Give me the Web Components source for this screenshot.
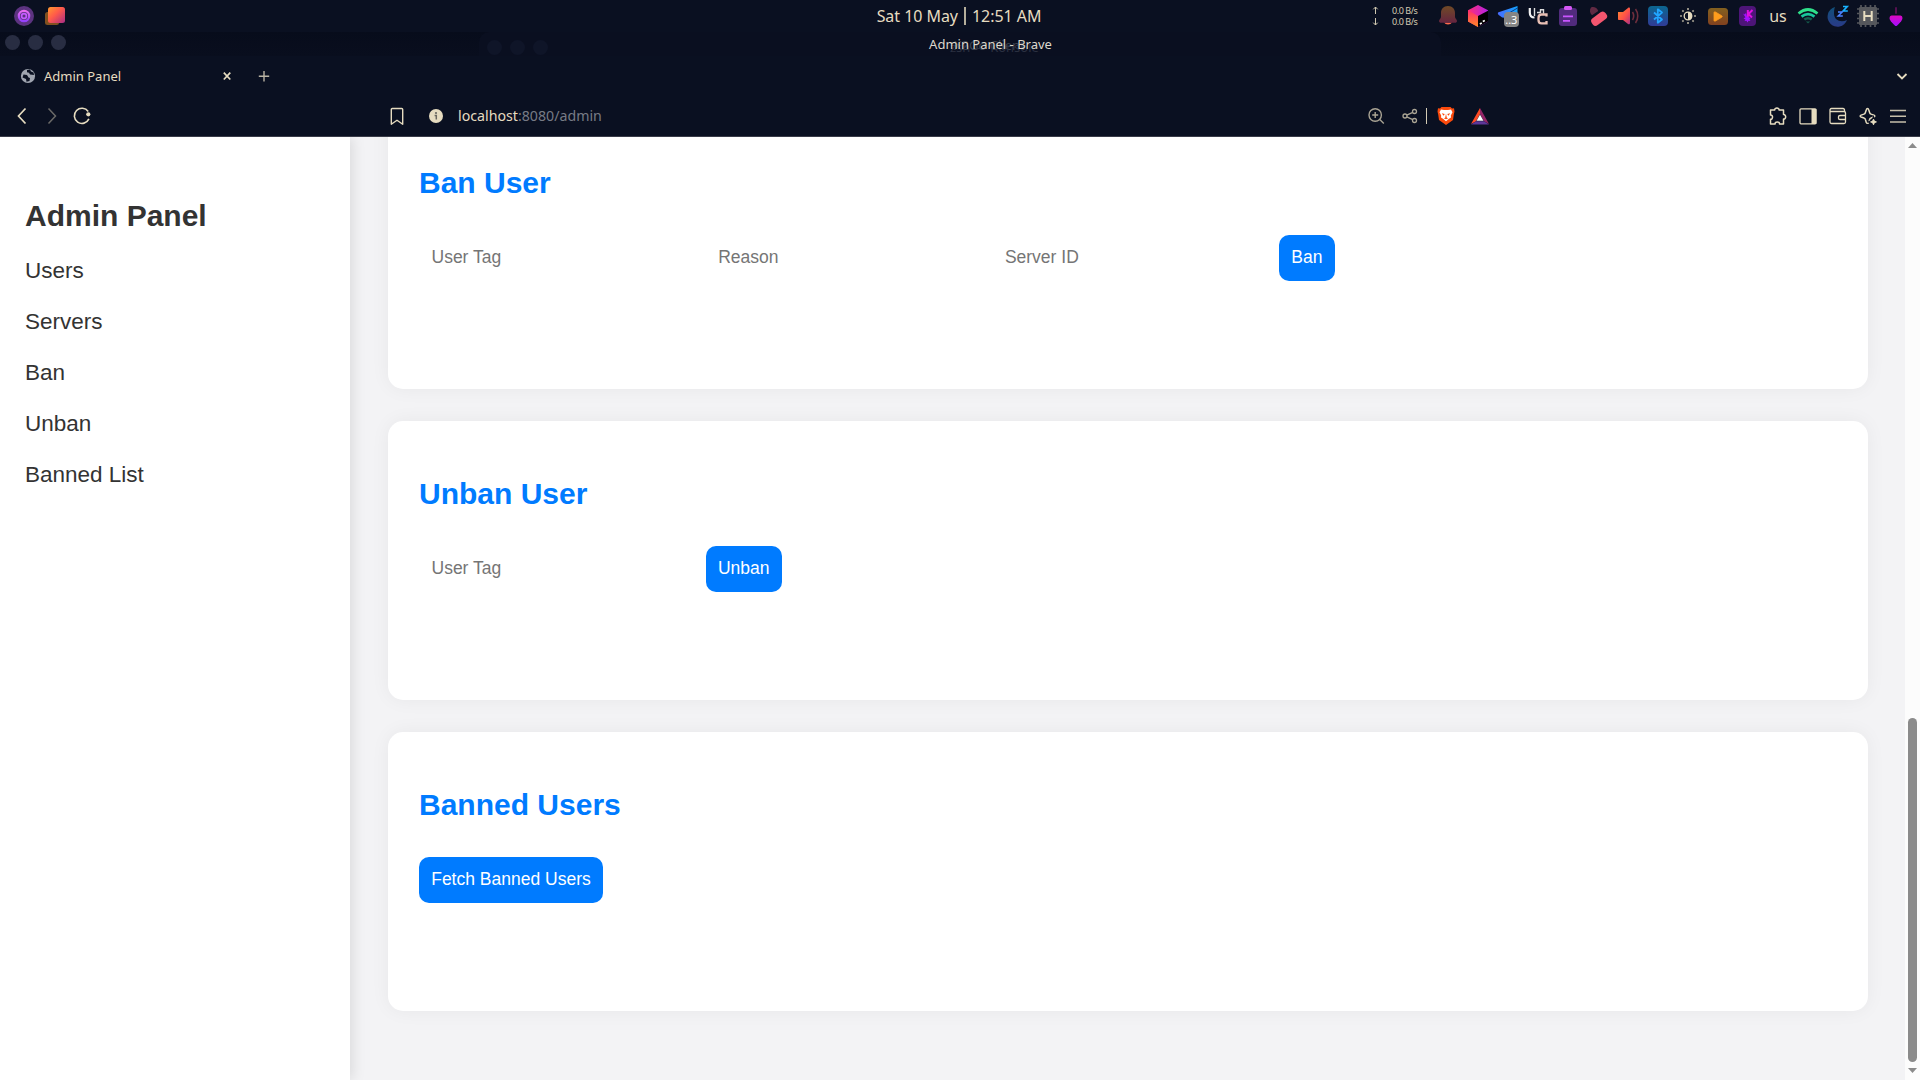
<!DOCTYPE html>
<html lang="en">
<head>
<meta charset="utf-8">
<title>Admin Panel</title>
<style>
html,body{margin:0;height:100%;overflow:hidden;background:#f3f3f5}
</style>
</head>
<body>
<desktop-screen></desktop-screen>
<script>
const define = (name, html) => customElements.define(name, class extends HTMLElement {
  constructor() {
    super();
    const t = document.createElement('template');
    t.innerHTML = typeof html === 'function' ? html(this) : html;
    this.attachShadow({ mode: 'open' }).append(t.content.cloneNode(true));
  }
});

const cream = '#e6dcc0';
const icons = {
  debian: `<defs><linearGradient id="a" x1="0" y1="0" x2="0" y2="1"><stop offset="0" stop-color="#ea6cf2"/><stop offset="1" stop-color="#9440ff"/></linearGradient></defs><circle cx="15" cy="16" r="10" fill="#5c3380"/><circle cx="15" cy="16" r="5.200" fill="none" stroke="url(#a)" stroke-width="2.200"/><circle cx="15" cy="16" r="2.400" fill="none" stroke="#c45bff" stroke-width="1.700"/>`,
  squares: `<defs><linearGradient id="a" x1="0" y1="0" x2="1" y2="1"><stop offset="0" stop-color="#ff9a2e"/><stop offset=".45" stop-color="#ff5a4a"/><stop offset="1" stop-color="#a82c86"/></linearGradient></defs><rect x="5" y="12" width="14" height="13" rx="2.5" fill="#80501f"/><rect x="8" y="7" width="17" height="16" rx="2.5" fill="url(#a)"/>`,
  bell: `<defs><linearGradient id="a" x1="0" y1="0" x2="0" y2="1"><stop offset="0" stop-color="#6f4a26"/><stop offset="1" stop-color="#652440"/></linearGradient></defs><path d="M11 22.500a4.500 3.500 0 0 0 8 0z" fill="#ff6a4d"/><path d="M15 6c-4.500 0-7 3.200-7 7v4c0 1.500-2 2.500-2 4 0 1.200 1 1.800 2 1.800h14c1 0 2-.6 2-1.800 0-1.500-2-2.500-2-4v-4c0-3.800-2.500-7-7-7z" fill="url(#a)"/>`,
  toolbox: `<defs><linearGradient id="a" x1="0" y1="0" x2="1" y2="0"><stop offset="0" stop-color="#ff2f74"/><stop offset="1" stop-color="#b421e6"/></linearGradient><linearGradient id="b" x1="0" y1="0" x2="0" y2="1"><stop offset="0" stop-color="#ff2c70"/><stop offset="1" stop-color="#ff8a22"/></linearGradient></defs><path d="M15 5l10 5.200v11.300L15 27 5 21.500V10.200z" fill="url(#a)"/><path d="M5 10.200l10 5.800v11L5 21.500z" fill="url(#b)"/><path d="M15 16l10-5.300v10.800L15 27z" fill="#000"/><path d="M16.800 24l2-1M19.800 21.500l2-1" stroke="#fff" stroke-width="1.500"/>`,
  telegram: `<defs><linearGradient id="a" x1="0" y1="0" x2="1" y2="0"><stop offset="0" stop-color="#4a6cff"/><stop offset="1" stop-color="#12a4ff"/></linearGradient></defs><path d="M24.500 6L5.500 12.300c-1 .5-.8 1.900.2 2.700l3.500 2.500L24.500 19z" fill="url(#a)"/><path d="M11 16L24.500 8" stroke="#0c3d80" stroke-width="1"/><rect x="11" y="12" width="15" height="15" rx="4" fill="#858585"/><text x="18.300" y="23.800" font-size="11" fill="#fff" text-anchor="middle" font-family="Noto Sans">..3</text>`,
  uc: `<path d="M6.800 8v4.500c0 3 1.500 5 4.700 5" fill="none" stroke="#f2f2f2" stroke-width="2.200"/><path d="M11.500 8v8M14 12.500h3.500v-2.800h3v4" stroke="#dcdcdc" fill="none" stroke-width="1.400"/><path d="M23.500 16.500v-2h-5c-2 0-3 1.200-3 3.400v2.100c0 2.200 1 3.400 3 3.400h5v-2.500" fill="none" stroke="#e9c0b5" stroke-width="2.300"/>`,
  clipboard: `<rect x="6" y="8" width="18" height="18" rx="3" fill="#512b7d"/><rect x="11" y="6" width="8" height="4" rx="1.500" fill="#d558f5"/><path d="M10 15.500h10v1.800h-10zM10 20h7v1.800h-7z" fill="#c955ff"/>`,
  pills: `<path d="M8 7.500c2.500-1.200 5.500 0 6.500 2l.8 1.500-6.300 4.200c-2.300-2-2.700-5.500-1-7.700z" fill="#612a43"/><rect x="7.500" y="14.500" width="17" height="8.500" rx="3.500" transform="rotate(-37 16 18.500)" fill="#f4566f"/>`,
  volume: `<defs><linearGradient id="a" x1="0" y1="0" x2="1" y2="1"><stop offset="0" stop-color="#ff8b2d"/><stop offset=".55" stop-color="#ff5049"/><stop offset="1" stop-color="#a42f85"/></linearGradient></defs><path d="M5 12h5l5-4c1-.8 2-.3 2 1v14c0 1.200-1 1.800-2 1l-5-4H6c-.6 0-1-.5-1-1z" fill="url(#a)"/><path d="M19.500 12c1.500 2.500 1.500 5.500 0 8M22.500 9c3 4 3 10 0 14" fill="none" stroke="#6e2e3d" stroke-width="1.600"/>`,
  bluetooth: `<defs><linearGradient id="a" x1="0" y1="0" x2="0" y2="1"><stop offset="0" stop-color="#0b668f"/><stop offset="1" stop-color="#303b96"/></linearGradient></defs><rect x="5" y="6" width="20" height="20" rx="4" fill="url(#a)"/><path d="M11 12.500l8 7-4.200 3.300V9.300l4.200 3.200-8 7" fill="none" stroke="#21a5ff" stroke-width="1.800" stroke-linejoin="round"/>`,
  brightness: `<circle cx="15" cy="16" r="3.800" fill="none" stroke="${cream}" stroke-width="1.300"/><path d="M15 12a4 4 0 0 1 0 8z" fill="${cream}"/><path d="M15 8v2M15 22v2M7 16h2M21 16h2M9.300 10.300l1.300 1.300M19.400 20.400l1.300 1.300M9.300 21.700l1.300-1.300M19.400 11.600l1.300-1.300" stroke="#aaa494" stroke-width="1.700"/>`,
  play: `<defs><linearGradient id="a" x1="0" y1="0" x2="0" y2="1"><stop offset="0" stop-color="#83601f"/><stop offset="1" stop-color="#82411f"/></linearGradient></defs><rect x="5" y="8" width="20" height="17" rx="3.500" fill="url(#a)"/><path d="M11 12.800c0-.9.700-1.200 1.400-.8l6.300 3.700c.7.400.7 1.200 0 1.600l-6.300 3.700c-.7.400-1.400.1-1.400-.8z" fill="#ff9d1d" stroke="#ff9d1d" stroke-width=".8"/>`,
  kget: `<rect x="6" y="6" width="17" height="20" rx="4" fill="#4d1578"/><path d="M14.800 10v7.500M19.500 10l-4 4 3.500 3.500" fill="none" stroke="#e010e0" stroke-width="2"/><path d="M10 13.500l1.500 1 1.500-1.500 1 3.500 3.500 1.500-1 1.500 1 1.500-2-.3-1 1.800-1-1.800-2 .3 1-1.500-2-1 2-1.300-1.200-1.700z" fill="#a512ff"/>`,
  wifi: `<g fill="none" stroke-width="2.700"><path d="M5.500 13.500q9.500-8 19 0" stroke="#2fe08a"/><path d="M8.500 16.600q6.500-5 13 0" stroke="#18c79b"/><path d="M11.300 19.500q3.700-2.500 7.400 0" stroke="#14624f"/></g><path d="M12.800 21.500h4.400L15 23.500z" fill="#13594a"/>`,
  moon: `<defs><linearGradient id="a" x1="0" y1="0" x2="0" y2="1"><stop offset="0" stop-color="#11507a"/><stop offset="1" stop-color="#293a87"/></linearGradient></defs><path d="M12 7a10 10 0 1 0 12 13c-6 3-13 .5-13-6.500 0-2.700.2-4.500 1-6.500z" fill="url(#a)"/><path d="M20 6.500h4.200l-4 4.500h4.600" fill="none" stroke="#18b2ff" stroke-width="1.700"/><path d="M15 12h4.200l-4 4h4.600" fill="none" stroke="#4b82ff" stroke-width="1.500"/>`,
  chip: `<path d="M8 5v22M12.500 5v22M17.500 5v22M22 5v22M4 9h22M4 13.500h22M4 18.500h22M4 23h22" stroke="#55575c" stroke-width="1.700"/><rect x="6" y="7" width="18" height="18" rx="1" fill="#55575c"/><path d="M11.300 11v10M18.700 11v10M11.300 16h7.400" stroke="${cream}" stroke-width="2"/>`,
  drop: `<defs><linearGradient id="a" x1="0" y1="0" x2="0" y2="1"><stop offset="0" stop-color="#dc0ac0"/><stop offset="1" stop-color="#a40cff"/></linearGradient></defs><rect x="14" y="7" width="2" height="7" rx="1" fill="#551050"/><path d="M8.500 18q0-2.500 2-2.500h9q2 0 2 2.500 0 2.500-5.300 7.500-1.200 1-2.400 0Q8.500 20.500 8.500 18z" fill="url(#a)"/>`,
  globe: `<circle cx="15" cy="15" r="7.100" fill="#a0a5b0"/><path d="M10.500 13.500l3.500.5 1.500 2.500 1.500.5-.5 3-3 .7-.5-2.700-3.500-1.500zM14 9l3-.5 1 2 2.500 1 .5 2.500-4-.5-1-1.800-2-.5z" fill="#0a1021"/>`,
  close: `<path d="M11.800 11.700l6.500 6.800M18.300 11.700l-6.500 6.800" stroke="${cream}" stroke-width="1.700"/>`,
  plus: `<path d="M15 10v10.500M9.800 15.200h10.400" stroke="#b9b3a4" stroke-width="1.400"/>`,
  down: `<path d="M10.500 13l4.500 4.500 4.500-4.500" fill="none" stroke="${cream}" stroke-width="1.800"/>`,
  back: `<path d="M18.500 7.500L11.500 15l7 7.500" fill="none" stroke="${cream}" stroke-width="1.700"/>`,
  forward: `<path d="M11.500 7.500l7 7.500-7 7.500" fill="none" stroke="#6b6a68" stroke-width="1.500"/>`,
  reload: `<path d="M21.200 10.500a7.600 7.600 0 1 0 .7 7.400" fill="none" stroke="${cream}" stroke-width="1.600"/><circle cx="21.300" cy="13.300" r="2.100" fill="${cream}"/>`,
  bookmark: `<path d="M9.300 8.500c0-.6.400-1 1-1h9.400c.6 0 1 .4 1 1v14.700l-5.700-4-5.700 4z" fill="none" stroke="${cream}" stroke-width="1.400" stroke-linejoin="round"/>`,
  info: `<circle cx="15" cy="15" r="7" fill="${cream}"/><circle cx="15" cy="12" r="1.100" fill="#6a6860"/><path d="M13.600 14.500H15.300v4" fill="none" stroke="#6a6860" stroke-width="1.500"/>`,
  zoom: `<g fill="none" stroke="#aaa494" stroke-width="1.400"><circle cx="14.200" cy="14" r="6.200"/><path d="M18.800 18.600l4 3.800M11.200 14h6M14.200 11v6"/></g>`,
  share: `<g fill="none" stroke="#aaa494" stroke-width="1.300"><circle cx="10" cy="15" r="2"/><circle cx="19.500" cy="10.500" r="2"/><circle cx="19.500" cy="19.500" r="2"/><path d="M11.800 14.200l6-2.800M11.800 15.800l6 2.800"/></g>`,
  brave: `<path d="M10.500 6h9l1.500 1.500 2-.2.500 3.200-.7 3-.8 5.500L15 24l-7-5-.8-5.500-.7-3 .5-3.200 2 .2z" fill="#fb4a0c"/><path d="M10 8.500l3 .5h4l3-.5 1.500 2.700-1.700 3.300.2 2-2 1.200-3 2.600-3-2.600-2-1.200.2-2-1.700-3.300z" fill="#fff"/><path d="M10.800 12.300l3 .8-1.300 1.600zM19.200 12.300l-3 .8 1.300 1.600zM12.800 17.300l2.200 1 2.200-1-1.400-.5-.8-4-.8 4z" fill="#fb4a0c"/>`,
  bat: `<path d="M15 7l-9 16 5-2.800L15 13z" fill="#ff4a24"/><path d="M15 7l9 16-5-2.800L15 13z" fill="#952568"/><path d="M6 23.500h18l-5-3.300h-8z" fill="#5d3798"/><path d="M15 13.500l3.500 6.300h-7z" fill="#fff"/>`,
  puzzle: `<path d="M7.500 9h4.200c-.3-2.600 4.700-2.600 4.400 0h4.400v4.600c2.900-.3 2.900 4.700 0 4.400V23h-4c.2-2.800-4.600-2.800-4.400 0H7.500v-4.700c2.700.2 2.700-4.600 0-4.400z" fill="none" stroke="${cream}" stroke-width="1.500" stroke-linejoin="round"/>`,
  panel: `<rect x="7" y="7.800" width="16" height="15" rx="1" fill="none" stroke="${cream}" stroke-width="1.300"/><path d="M18.500 8h4.800v15h-4.800z" fill="${cream}"/>`,
  wallet: `<g fill="none" stroke="${cream}" stroke-width="1.300"><path d="M21.500 10.500V9c0-.8-.5-1.500-1.500-1.500H8.500c-1 0-1.500.6-1.500 1.500v12c0 1 .5 1.500 1.500 1.500h12.500c1 0 1.500-.5 1.500-1.500v-9c0-1-.5-1.500-1.500-1.500H7.500M22.500 14.500h-5.500c-1 0-1.500.5-1.500 1.300v1.400c0 .8.500 1.300 1.500 1.300h5.500"/></g>`,
  leo: `<path d="M14.500 7.500c.7 0 1 .5 1.200 1.200l1 3.100c.2.700.6 1.100 1.300 1.300l3 1c1.100.4 1.100 1.500 0 1.900l-3 1c-.7.200-1.100.6-1.300 1.300l-1 3.100c-.4 1.200-2 1.200-2.400 0l-1-3.100c-.2-.7-.6-1.100-1.300-1.300l-3-1c-1.100-.4-1.100-1.500 0-1.900l3-1c.7-.2 1.100-.6 1.300-1.300l1-3.100c.2-.7.5-1.200 1.200-1.200z" fill="none" stroke="${cream}" stroke-width="1.500"/><path d="M20.500 18l.9 2 2.100.9-2.100.9-.9 2.100-.9-2.100-2.100-.9 2.100-.9z" fill="${cream}" stroke="#0a1021" stroke-width="3" paint-order="stroke"/><path d="M20.500 18l.9 2 2.100.9-2.100.9-.9 2.100-.9-2.100-2.100-.9 2.100-.9z" fill="${cream}" stroke="${cream}" stroke-width=".7"/>`,
  menu: `<path d="M7 9.500h16M7 15.300h16M7 21h16" stroke="#c6beaa" stroke-width="1.600"/>`,
  arrows: `<g fill="none" stroke="#cfc7b0" stroke-width="1"><path d="M15.500 14V7M13.300 9.300l2.200-2.300 2.200 2.300M15.500 18v7M13.300 22.700l2.200 2.300 2.200-2.300"/></g>`
};

customElements.define('ui-icon', class extends HTMLElement {
  constructor() { super(); this.attachShadow({ mode: 'open' }); }
  connectedCallback() {
    const h = this.hasAttribute('tray') ? 32 : 30;
    this.shadowRoot.innerHTML = `<style>:host{display:block;flex:none;width:30px;height:${h}px}svg{display:block}</style><svg width="30" height="${h}" viewBox="0 0 30 ${h}">${icons[this.getAttribute('name')] || ''}</svg>`;
  }
});

define('system-bar', `
<style>
:host{display:grid;grid-template-columns:1fr auto 1fr;height:32px;background:#0a1021;color:#e6dcc0;font-family:"Noto Sans",sans-serif}
.left{display:flex;padding-left:9px;gap:1px}
.clock{display:flex;align-items:center;font-size:16px;line-height:32px;white-space:nowrap;padding-right:2px;letter-spacing:-.05px}
.clock i{width:2px;height:18px;background:#b5ae9b;margin:0 6px 0 6px}
.right{display:flex;justify-content:flex-end;padding-right:9px}
.net{display:flex;flex-direction:column;justify-content:center;font-size:9px;line-height:11px;width:26px;white-space:nowrap;margin:0 15px 0 2px;letter-spacing:-.45px;color:#d5ccb2}
.us{width:30px;text-align:center;font-size:16px;line-height:32px}
.last{margin-left:-2px}
</style>
<div class="left"><ui-icon tray name="debian"></ui-icon><ui-icon tray name="squares"></ui-icon></div>
<div class="clock"><span>Sat 10 May</span><i></i><span>12:51 AM</span></div>
<div class="right"><ui-icon tray name="arrows"></ui-icon><div class="net"><span>0.0 B/s</span><span>0.0 B/s</span></div>
${['bell','toolbox','telegram','uc','clipboard','pills','volume','bluetooth','brightness','play','kget'].map(n => `<ui-icon tray name="${n}"></ui-icon>`).join('')}
<span class="us">us</span>${['wifi','moon','chip'].map(n => `<ui-icon tray name="${n}"></ui-icon>`).join('')}<ui-icon class="last" tray name="drop"></ui-icon></div>`);

define('window-title', `
<style>
:host{display:flex;position:relative;height:24px;background:linear-gradient(#070c1b,#090e1e);font:13px/24px "Noto Sans",sans-serif;color:#ddd8cd;justify-content:center}
.dots{position:absolute;left:5px;top:3px;display:flex;gap:8px}
.dots i{width:15px;height:15px;border-radius:50%;background:#282d42}
.ghost{position:absolute;left:479px;right:479px;top:0;height:24px;border-radius:10px 10px 0 0;background:#0a0f20}
.ghost .dots{left:8px;top:8px}
.ghost .dots i{background:#0f1528}
.shade{position:absolute;top:1px;white-space:nowrap;color:#3c414d}
.t{position:relative;white-space:nowrap;margin-left:61px}
</style>
<div class="ghost"><div class="dots"><i></i><i></i><i></i></div><span class="shade" style="left:475px">X2Go Client</span><span class="shade" style="left:471px;top:3px;color:#2a3040">zsh — Konsole</span></div>
<div class="dots"><i></i><i></i><i></i></div><span class="t">Admin Panel - Brave</span>`);

define('tab-strip', `
<style>
:host{display:flex;height:40px;align-items:center;background:#0a1021;color:#e6dcc0;font:13px "Noto Sans",sans-serif;padding:0 3px 0 13px}
.name{width:168px;margin-left:1px}
.new{margin-left:7px}.end{margin-left:auto}
</style>
<ui-icon name="globe"></ui-icon><span class="name">Admin Panel</span><ui-icon name="close"></ui-icon><ui-icon class="new" name="plus"></ui-icon><ui-icon class="end" name="down"></ui-icon>`);

define('address-bar', `
<style>
:host{display:flex;height:41px;box-sizing:border-box;align-items:center;background:#0a1021;border-bottom:1px solid #393b48;color:#e6dcc0;font:14.200px "Noto Sans",sans-serif;padding:0 7px 1px}
.url{margin-left:7px;flex:1}.url span{color:#777b85}
.book{margin-left:285px}.info{margin-left:9px}
.sep{width:1px;height:16px;background:#d3cbb5;margin-left:1px}
.share{margin-left:4px}.brave{margin-left:4px}.bat{margin-left:4px}.ext{margin-left:268px}
</style>
<ui-icon name="back"></ui-icon><ui-icon name="forward"></ui-icon><ui-icon name="reload"></ui-icon>
<ui-icon class="book" name="bookmark"></ui-icon><ui-icon class="info" name="info"></ui-icon>
<div class="url">localhost<span>:8080/admin</span></div>
<ui-icon name="zoom"></ui-icon><ui-icon class="share" name="share"></ui-icon><i class="sep"></i><ui-icon class="brave" name="brave"></ui-icon><ui-icon class="bat" name="bat"></ui-icon>
<ui-icon class="ext" name="puzzle"></ui-icon><ui-icon name="panel"></ui-icon><ui-icon name="wallet"></ui-icon><ui-icon name="leo"></ui-icon><ui-icon name="menu"></ui-icon>`);

define('side-nav', `
<style>
:host{display:block;flex:none;width:350px;height:943px;box-sizing:border-box;padding:62px 25px 0;background:#fff;box-shadow:2.500px 0 12.500px rgba(0,0,0,.1);color:#333;position:relative;font-family:"Liberation Sans",Arial,sans-serif}
h2{margin:0 0 25px;font-size:30px;line-height:34px}
nav{display:flex;flex-direction:column;gap:25px}
a{font-size:22.500px;line-height:26px}
</style>
<h2>Admin Panel</h2><nav><a>Users</a><a>Servers</a><a>Ban</a><a>Unban</a><a>Banned List</a></nav>`);

define('panel-card', `
<style>
:host{display:block;flex:none;height:279px;box-sizing:border-box;padding:56px 31px 0;background:#fff;border-radius:15px;box-shadow:0 0 18.750px rgba(0,0,0,.05)}
.h{color:#007bff;font-weight:bold;font-size:30px;line-height:34px;margin-bottom:35px}
.row{display:flex}
</style>
<div class="h"><slot name="title"></slot></div><div class="row"><slot></slot></div>`);

define('text-field', `<style>:host{display:block;width:286.700px;height:46px;box-sizing:border-box;padding:12px 12.500px;color:#757575;font-size:17.500px;line-height:20px}</style><slot></slot>`);
define('action-button', `<style>:host{display:block;height:46px;box-sizing:border-box;padding:12px 12.200px;border-radius:10px;background:#007bff;color:#fff;font-size:17.500px;line-height:20px;white-space:nowrap}</style><slot></slot>`);

define('scroll-bar', `
<style>
:host{display:flex;flex:none;flex-direction:column;align-items:center;width:15px;height:943px;background:#fcfcfc;position:relative}
svg{display:block;flex:none}
i{width:9px;height:344px;border-radius:4.500px;background:#8b8b8b;margin-top:auto}
</style>
<svg width="15" height="15"><path d="M3 11l4.500-5 4.500 5z" fill="#8b8b8b"/></svg><i></i><svg width="15" height="18"><path d="M3 6l4.500 5L12 6z" fill="#8b8b8b"/></svg>`);

define('admin-page', `
<style>
:host{display:flex;height:943px;overflow:hidden;background:#f3f3f5;font-family:"Liberation Sans",Arial,sans-serif}
main{flex:1;height:943px;overflow:hidden;display:flex;flex-direction:column;gap:32px;padding:0 37px 0 38px;box-sizing:border-box}
panel-card:first-child{margin-top:-27px}
</style>
<side-nav></side-nav>
<main>
<panel-card><span slot="title">Ban User</span><text-field>User Tag</text-field><text-field>Reason</text-field><text-field>Server ID</text-field><action-button>Ban</action-button></panel-card>
<panel-card><span slot="title">Unban User</span><text-field>User Tag</text-field><action-button>Unban</action-button></panel-card>
<panel-card><span slot="title">Banned Users</span><action-button>Fetch Banned Users</action-button></panel-card>
</main>
<scroll-bar></scroll-bar>`);

define('desktop-screen', `
<style>:host{display:flex;flex-direction:column;width:1920px;height:1080px;overflow:hidden}</style>
<system-bar></system-bar><window-title></window-title><tab-strip></tab-strip><address-bar></address-bar>
<admin-page></admin-page>`);
</script>
</body>
</html>
